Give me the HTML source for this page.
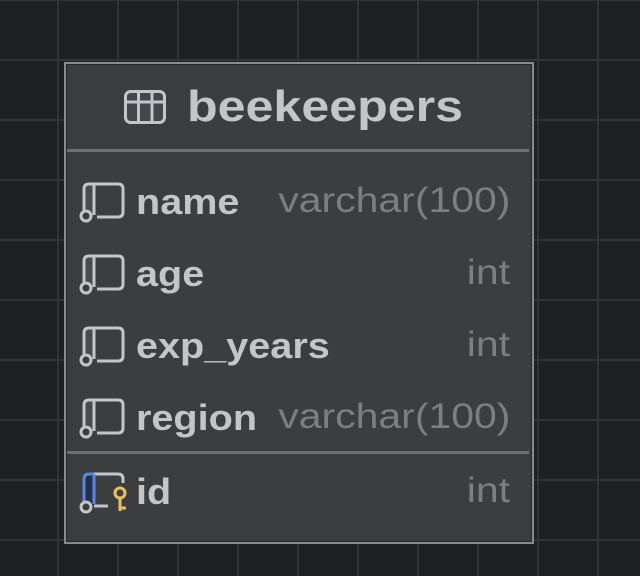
<!DOCTYPE html>
<html><head><style>
html,body{margin:0;padding:0;}
body{width:640px;height:576px;overflow:hidden;position:relative;background-color:#1f2023;
background-image:linear-gradient(to right,#333437 2px,transparent 2px),linear-gradient(to bottom,#333437 2px,transparent 2px);
background-size:60px 60px;background-position:57px 0,0 -1px;font-family:"Liberation Sans",Arial,sans-serif;}
.card{position:absolute;left:64px;top:62px;width:466px;height:478px;border:2px solid #8b8b8d;background:#3c3d3f;box-shadow:inset 0 0 0 1px #26272a;}
.sep{position:absolute;left:67px;width:462px;height:3px;background:#6f7072;}
.t{position:absolute;color:#c4c5c9;font-weight:bold;white-space:nowrap;transform:scaleX(1.1);transform-origin:left center;}
.ty{position:absolute;right:130px;color:#7d7e83;font-size:35px;white-space:nowrap;transform:scaleX(1.17);transform-origin:right center;}
svg{position:absolute;}
</style></head><body>
<div class="card"></div>
<div class="sep" style="top:149px"></div>
<div class="sep" style="top:451px"></div>
<svg style="left:120px;top:86px" width="50" height="42" viewBox="0 0 50 42">
<rect x="5.5" y="5.5" width="39" height="31" rx="5" fill="#45464c" stroke="#c4c5c9" stroke-width="3"/>
<path d="M5 16H45M18.5 6V36M32 6V36" stroke="#c4c5c9" stroke-width="3"/>
</svg>
<div class="t" style="left:187px;top:82px;font-size:44px;transform:scaleX(1.14);">beekeepers</div>

<svg style="left:76px;top:178px" width="52" height="48"><rect x="8" y="6" width="10" height="33" fill="#4a4b52"/><path d="M18 6V37M8 36V11Q8 6 13 6H42Q47 6 47 11V34Q47 39 42 39H21" fill="none" stroke="#c4c5c9" stroke-width="3"/><circle cx="10" cy="38" r="5" fill="#3c3d3f" stroke="#c4c5c9" stroke-width="3"/></svg>
<div class="t" style="left:136px;top:181px;font-size:36px;">name</div>
<div class="ty" style="top:181px;">varchar(100)</div>

<svg style="left:76px;top:250px" width="52" height="48"><rect x="8" y="6" width="10" height="33" fill="#4a4b52"/><path d="M18 6V37M8 36V11Q8 6 13 6H42Q47 6 47 11V34Q47 39 42 39H21" fill="none" stroke="#c4c5c9" stroke-width="3"/><circle cx="10" cy="38" r="5" fill="#3c3d3f" stroke="#c4c5c9" stroke-width="3"/></svg>
<div class="t" style="left:136px;top:253px;font-size:36px;">age</div>
<div class="ty" style="top:253px;">int</div>

<svg style="left:76px;top:322px" width="52" height="48"><rect x="8" y="6" width="10" height="33" fill="#4a4b52"/><path d="M18 6V37M8 36V11Q8 6 13 6H42Q47 6 47 11V34Q47 39 42 39H21" fill="none" stroke="#c4c5c9" stroke-width="3"/><circle cx="10" cy="38" r="5" fill="#3c3d3f" stroke="#c4c5c9" stroke-width="3"/></svg>
<div class="t" style="left:136px;top:325px;font-size:36px;">exp_years</div>
<div class="ty" style="top:325px;">int</div>

<svg style="left:76px;top:394px" width="52" height="48"><rect x="8" y="6" width="10" height="33" fill="#4a4b52"/><path d="M18 6V37M8 36V11Q8 6 13 6H42Q47 6 47 11V34Q47 39 42 39H21" fill="none" stroke="#c4c5c9" stroke-width="3"/><circle cx="10" cy="38" r="5" fill="#3c3d3f" stroke="#c4c5c9" stroke-width="3"/></svg>
<div class="t" style="left:136px;top:397px;font-size:36px;">region</div>
<div class="ty" style="top:397px;">varchar(100)</div>

<svg style="left:76px;top:468px" width="60" height="50"><rect x="8" y="6" width="10" height="32" fill="#24304a"/><path d="M18 6H42Q47 6 47 11V15M18 38H32" fill="none" stroke="#c4c5c9" stroke-width="3"/><path d="M18 6V36M8 34V11Q8 6 13 6H18" fill="none" stroke="#5b85e0" stroke-width="3"/><circle cx="10" cy="39" r="5" fill="#3c3d3f" stroke="#c4c5c9" stroke-width="3"/><circle cx="44" cy="25" r="5" fill="none" stroke="#e8c060" stroke-width="3"/><path d="M44 30V43M44 40H50" stroke="#e8c060" stroke-width="3"/></svg>
<div class="t" style="left:136px;top:471px;font-size:36px;">id</div>
<div class="ty" style="top:471px;">int</div>
</body></html>
